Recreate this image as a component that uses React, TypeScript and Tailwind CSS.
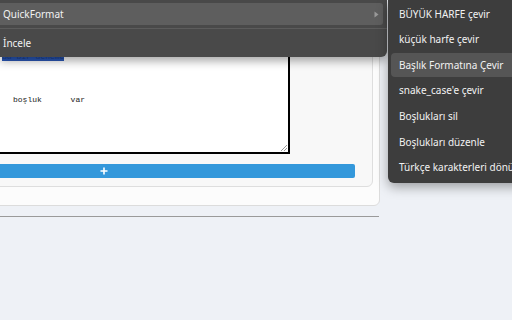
const subItems = [
  "BÜYÜK HARFE çevir",
  "küçük harfe çevir",
  "Başlık Formatına Çevir",
  "snake_case'e çevir",
  "Boşlukları sil",
  "Boşlukları düzenle",
  "Türkçe karakterleri dönüştür",
];

function ResizeGrip() {
  return (
    <svg width="8" height="8" viewBox="0 0 8 8" className="absolute bottom-0 right-0">
      <path d="M7 1 L1 7 M7 4 L4 7" stroke="#9a9a9a" strokeWidth="1" />
    </svg>
  );
}

export default function App() {
  return (
    <div className="relative h-[320px] w-[512px] overflow-hidden bg-[#eef1f6] font-['Noto_Sans',sans-serif]">
      {/* Page content (scrolled, left edge out of view) */}
      <div className="-ml-[150px] flex w-[530px] flex-col">
        <div className="-mt-[10px] rounded-md border border-[#dcdcdc] bg-[#fcfcfc] pb-[18px] pr-[6px]">
          <div className="rounded-md border border-[#dedede] bg-[#f8f8f8] pb-[8px] pr-[17px]">
            {/* textarea */}
            <div className="relative h-[162px] w-[438px] border border-r-2 border-b-2 border-black bg-white font-['Liberation_Mono',monospace] text-[8px] text-[#222]">
              <div className="mt-[58px] pl-[149px]">
                <span className="bg-[#2a58b8] leading-[10px] text-[#1a3f8f]">Bu bir deneme</span>
              </div>
              <div className="mt-[32px] whitespace-pre pl-[160px] leading-[10px]">boşluk      var</div>
              <ResizeGrip />
            </div>
            {/* add button */}
            <button className="mt-[10px] flex h-[14px] w-[503px] items-center justify-center rounded-[2px] bg-[#3498db] text-white">
              <svg width="8" height="8" viewBox="0 0 8 8">
                <path d="M4 0.5 V7.5 M0.5 4 H7.5" stroke="#fff" strokeWidth="1.6" />
              </svg>
            </button>
          </div>
        </div>
        <div className="mt-[10px] h-px w-[529px] bg-[#9a9a9a]" />
      </div>

      {/* Context menu */}
      <div className="absolute left-0 top-0 w-[387px] rounded-br-md bg-[#494949] pt-[3px] text-[10px] text-[#f2f2f2] shadow-[0_4px_10px_rgba(0,0,0,0.35)]">
        <div className="mr-[4px] flex h-[22px] items-center justify-between rounded-r-[3px] bg-[#5e5e5e] pl-[3px] pr-[4px]">
          <span>QuickFormat</span>
          <svg width="5" height="7" viewBox="0 0 5 7">
            <path d="M0.5 0.5 L4.5 3.5 L0.5 6.5 Z" fill="#9a9a9a" />
          </svg>
        </div>
        <div className="mt-[3px] h-px bg-[#5c5c5c]" />
        <div className="flex h-[28px] items-center pl-[3px]">İncele</div>
      </div>

      {/* Submenu */}
      <div className="absolute left-[388px] top-0 flex w-[140px] flex-col gap-[1.67px] rounded-bl-md bg-[#3d3d3d] pb-[3px] pl-[3px] pt-[2px] text-[10px] text-[#f2f2f2] shadow-[0_4px_12px_rgba(0,0,0,0.35)]">
        {subItems.map((item, i) => (
          <div
            key={item}
            className={`flex h-6 items-center whitespace-nowrap rounded-l-[4px] pl-[8px] ${
              i === 2 ? "bg-[#555555]" : ""
            }`}
          >
            {item}
          </div>
        ))}
      </div>
    </div>
  );
}
